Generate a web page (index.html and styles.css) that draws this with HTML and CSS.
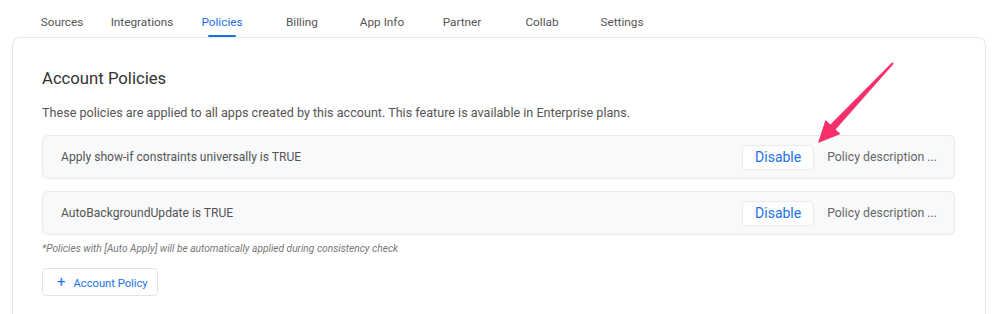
FILE: index.html
```html
<!DOCTYPE html>
<html lang="en">
  <head>
    <meta charset="UTF-8" />
    <meta name="viewport" content="width=device-width, initial-scale=1.0" />
    <title>Account Policies</title>
    <link rel="stylesheet" href="styles.css">
  </head>
  <body>
    <!-- Tabs -->
    <nav class="tabs">
      <a class="tab">Sources</a>
      <a class="tab">Integrations</a>
      <a class="tab active">Policies</a>
      <a class="tab">Billing</a>
      <a class="tab">App Info</a>
      <a class="tab">Partner</a>
      <a class="tab">Collab</a>
      <a class="tab">Settings</a>
    </nav>

    <!-- Policies card -->
    <div class="card">
      <h2>Account Policies</h2>
      <p class="intro">These policies are applied to all apps created by this account. This feature is available in Enterprise plans.</p>

      <div class="policy">
        <span class="policy-name">Apply show-if constraints universally is TRUE</span>
        <button class="disable-btn">Disable</button>
        <span class="policy-desc">Policy description ...</span>
      </div>
      <div class="policy">
        <span class="policy-name">AutoBackgroundUpdate is TRUE</span>
        <button class="disable-btn">Disable</button>
        <span class="policy-desc">Policy description ...</span>
      </div>

      <p class="note">*Policies with [Auto Apply] will be automatically applied during consistency check</p>

      <button class="add-btn"><span class="plus">+</span>Account Policy</button>
    </div>

    <!-- annotation arrow -->
    <svg class="arrow" width="998" height="314" viewBox="0 0 998 314">
      <polygon fill="#f7306b" points="893.7,63.7 835.6,129.4 840.5,134 818,143 825.5,120 830.4,124.6 892.3,62.3" />
    </svg>
  </body>
</html>
```

FILE: styles.css
```css
body {
  font-family: Roboto, "Liberation Sans", Arial, sans-serif;
  margin: 0;
  height: 314px;
  overflow: hidden;
  background: #fff;
  color: #3c4043;
}
.tabs {
  display: flex;
  padding-left: 22px;
  height: 36px;
}
.tab {
  width: 80px;
  text-align: center;
  font-size: 11.8px;
  line-height: 30px;
  padding-top: 7px;
  color: #555;
  position: relative;
}
.tab.active {
  color: #1a73e8;
}
.tab.active::after {
  content: "";
  position: absolute;
  left: 26px;
  width: 28px;
  bottom: -1px;
  height: 2px;
  border-radius: 1px;
  background: #1a73e8;
}
.card {
  margin: 1px 12px 0;
  border: 1px solid #e6e6e6;
  border-bottom: none;
  border-radius: 8px 8px 0 0;
  padding: 29px 30px 0 29px;
  height: 248px;
}
h2 {
  margin: 0;
  font-size: 16.7px;
  font-weight: 400;
  line-height: 24px;
  color: #333;
}
.intro {
  margin: 12px 0 12px;
  font-size: 12.6px;
  line-height: 20px;
  color: #555;
}
.policy {
  display: flex;
  align-items: center;
  gap: 13px;
  padding: 8.5px 17px 8.5px 18px;
  border: 1px solid #e8eaed;
  border-radius: 6px;
  background: #f8f9fa;
  margin-bottom: 12px;
}
.policy-name {
  flex: 1;
  font-size: 12.1px;
  color: #555;
}
.disable-btn {
  height: 25px;
  width: 72px;
  padding: 0;
  background: #fff;
  border: 1px solid #e8eaed;
  border-radius: 4px;
  color: #1a73e8;
  font-family: inherit;
  font-size: 14px;
  font-weight: 400;
}
.policy-desc {
  font-size: 12.3px;
  color: #666;
}
.note {
  margin: -6px 0 11px;
  font-size: 10.2px;
  line-height: 16px;
  font-style: italic;
  color: #777;
}
.add-btn {
  height: 28px;
  width: 116px;
  padding: 0 0 0 14px;
  text-align: left;
  background: #fff;
  border: 1px solid #e4e4e4;
  border-radius: 4px;
  color: #1a73e8;
  font-family: inherit;
  font-size: 11.2px;
  font-weight: 400;
}
.plus {
  font-size: 15px;
  margin-right: 8px;
}
.arrow {
  position: absolute;
  left: 0;
  top: 0;
}
```
